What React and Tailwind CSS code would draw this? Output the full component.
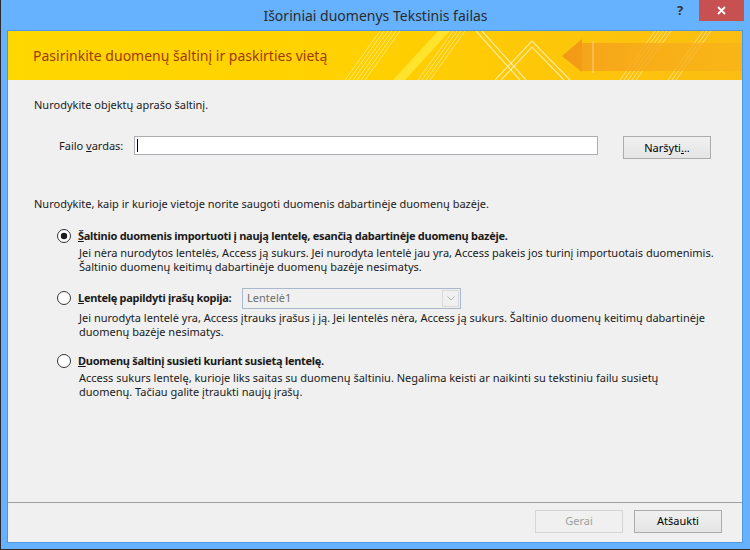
import React from 'react';

const ui = { fontFamily: '"Noto Sans", "Open Sans", sans-serif' };

function Radio({ checked }) {
    return (
        <svg width="14" height="14" viewBox="0 0 14 14" className="shrink-0">
            <circle cx="7" cy="7" r="6.5" fill="#fff" stroke="#333" />
            {checked && <circle cx="7" cy="7" r="3.2" fill="#1a1a1a" />}
        </svg>
    );
}

function BannerArt() {
    return (
        <svg className="absolute inset-0" width="734" height="49" viewBox="0 0 734 49">
            <defs>
                <linearGradient id="bg" x1="0" x2="1" y1="0" y2="0">
                    <stop offset="0" stopColor="#ffd800" />
                    <stop offset="0.5" stopColor="#ffd000" />
                    <stop offset="1" stopColor="#fbbd12" />
                </linearGradient>
                <linearGradient id="shaft" x1="0" x2="1" y1="0" y2="0">
                    <stop offset="0" stopColor="#f5a11c" stopOpacity="0.9" />
                    <stop offset="1" stopColor="#f8b11a" stopOpacity="0.6" />
                </linearGradient>
            </defs>
            <rect width="734" height="49" fill="url(#bg)" />
            {/* hatch groups */}
            <g stroke="#fff" strokeOpacity="0.45" strokeWidth="1">
                {[0, 4, 8, 12, 16, 20].map((d) => (
                    <line key={'a' + d} x1={337 + d} y1="49" x2={372 + d} y2="0" />
                ))}
                {[0, 4, 8, 12].map((d) => (
                    <line key={'b' + d} x1={410 + d} y1="49" x2={445 + d} y2="0" />
                ))}
                {[0, 4, 8, 12, 16].map((d) => (
                    <line key={'c' + d} x1={612 + d} y1="49" x2={647 + d} y2="0" />
                ))}
                {[0, 4, 8].map((d) => (
                    <line key={'d' + d} x1={660 + d} y1="49" x2={695 + d} y2="0" />
                ))}
            </g>
            <polygon points="385,49 397,49 442,0 430,0" fill="#ffec40" fillOpacity="0.7" />
            {/* peak lines */}
            <g stroke="#fff" strokeOpacity="0.6" strokeWidth="1.2" fill="none">
                <polyline points="487,49 524,10 562,49" />
                <polyline points="493,49 524,16 556,49" />
                <line x1="468" y1="0" x2="512" y2="49" />
                <line x1="474" y1="0" x2="518" y2="49" />
            </g>
            {/* arrow */}
            <rect x="574" y="12" width="160" height="28" fill="url(#shaft)" />
            <polygon points="554,25 574,8 574,41" fill="#f39a17" />
            <line x1="585" y1="10" x2="585" y2="42" stroke="#fff" strokeOpacity="0.45" />
        </svg>
    );
}

function Button({ children, disabled }) {
    return (
        <button
            className={
                disabled
                    ? 'w-[88px] h-[23px] border border-[#d5d5d5] bg-[#f0f0f0] text-[#a0a0a0] text-[11px]'
                    : 'w-[88px] h-[23px] border border-[#acacac] bg-gradient-to-b from-[#f0f0f0] to-[#e5e5e5] text-black text-[11px]'
            }
        >
            {children}
        </button>
    );
}

export default function App() {
    return (
        <div
            className="w-[750px] h-[550px] bg-[#66b2fe] border-l border-b border-[#2a2a2a] flex flex-col overflow-hidden"
            style={ui}
        >
            {/* Title bar */}
            <div className="h-[30px] shrink-0 flex items-start relative">
                <div className="absolute left-0 right-0 top-[5px] text-center text-[14px] text-[#2b2b2b]">
                    Išoriniai duomenys Tekstinis failas
                </div>
                <div className="ml-auto flex items-start">
                    <div className="w-[20px] h-[21px] mr-[9px] flex items-center justify-center text-[13px] font-bold text-[#333]">?</div>
                    <div className="w-[45px] h-[21px] mr-[6px] bg-[#c75050] flex items-center justify-center">
                        <svg width="9" height="9" viewBox="0 0 9 9">
                            <path d="M1 1L8 8M8 1L1 8" stroke="#fff" strokeWidth="1.8" />
                        </svg>
                    </div>
                </div>
            </div>

            {/* Client */}
            <div className="ml-[6px] mr-[7px] h-[513px] border border-[#4f98e0] bg-[#f0f0f0] flex flex-col text-[11px] text-[#1a1a1a]">
                {/* Banner */}
                <div className="relative h-[49px] shrink-0 flex items-center">
                    <BannerArt />
                    <div className="relative pl-[25px] text-[14px] text-[#a13a0c]">
                        Pasirinkite duomenų šaltinį ir paskirties vietą
                    </div>
                </div>

                {/* Body */}
                <div className="flex-1 pl-[26px] leading-[14px]">
                    <div className="mt-[18px]">Nurodykite objektų aprašo šaltinį.</div>

                    <div className="mt-[24px] flex items-start">
                        <div className="w-[75px] ml-[25px] h-[19px] flex items-center">
                            <span>
                                Failo <u>v</u>ardas:
                            </span>
                        </div>
                        <div className="w-[464px] h-[19px] border border-[#abadb3] bg-white flex items-center pl-[2px]">
                            <div className="w-px h-[13px] bg-black" />
                        </div>
                        <div className="ml-[25px]">
                            <Button>
                                Naršyti<u>.</u>..
                            </Button>
                        </div>
                    </div>

                    <div className="mt-[38px]">
                        Nurodykite, kaip ir kurioje vietoje norite saugoti duomenis dabartinėje duomenų bazėje.
                    </div>

                    {/* Option 1 */}
                    <div className="mt-[18px] ml-[23px] flex items-center gap-[7px]">
                        <Radio checked />
                        <span className="font-bold tracking-[-0.28px] whitespace-nowrap">
                            <u>Š</u>altinio duomenis importuoti į naują lentelę, esančią dabartinėje duomenų bazėje.
                        </span>
                    </div>
                    <div className="mt-[3px] ml-[45px] whitespace-nowrap">
                        Jei nėra nurodytos lentelės, Access ją sukurs. Jei nurodyta lentelė jau yra, Access pakeis jos turinį importuotais duomenimis.
                        <br />
                        Šaltinio duomenų keitimų dabartinėje duomenų bazėje nesimatys.
                    </div>

                    {/* Option 2 */}
                    <div className="mt-[14px] ml-[23px] h-[20px] flex items-center">
                        <Radio />
                        <span className="font-bold tracking-[-0.28px] ml-[7px] w-[164px] shrink-0 whitespace-nowrap">
                            <u>L</u>entelę papildyti įrašų kopija:
                        </span>
                        <div className="w-[219px] h-[21px] border border-[#a9b8cc] bg-[#f0f0f0] flex items-center">
                            <span className="flex-1 pl-[4px] text-[#6d6d6d]">Lentelė1</span>
                            <div className="w-[17px] h-[17px] mr-[1px] border border-[#d9d9d9] flex items-center justify-center">
                                <svg width="8" height="5" viewBox="0 0 8 5">
                                    <path d="M0.5 0.5L4 4L7.5 0.5" stroke="#b0b0b0" fill="none" />
                                </svg>
                            </div>
                        </div>
                    </div>
                    <div className="mt-[3px] ml-[45px] whitespace-nowrap">
                        Jei nurodyta lentelė yra, Access įtrauks įrašus į ją. Jei lentelės nėra, Access ją sukurs. Šaltinio duomenų keitimų dabartinėje
                        <br />
                        duomenų bazėje nesimatys.
                    </div>

                    {/* Option 3 */}
                    <div className="mt-[15px] ml-[23px] flex items-center gap-[7px]">
                        <Radio />
                        <span className="font-bold tracking-[-0.28px] whitespace-nowrap">
                            <u>D</u>uomenų šaltinį susieti kuriant susietą lentelę.
                        </span>
                    </div>
                    <div className="mt-[3px] ml-[45px] whitespace-nowrap">
                        Access sukurs lentelę, kurioje liks saitas su duomenų šaltiniu. Negalima keisti ar naikinti su tekstiniu failu susietų
                        <br />
                        duomenų. Tačiau galite įtraukti naujų įrašų.
                    </div>
                </div>

                {/* Footer */}
                <div className="h-[40px] shrink-0 border-t border-[#a0a0a0] flex items-start justify-end pt-[7px] pr-[20px] gap-[11px]">
                    <Button disabled>Gerai</Button>
                    <Button>Atšaukti</Button>
                </div>
            </div>
        </div>
    );
}
